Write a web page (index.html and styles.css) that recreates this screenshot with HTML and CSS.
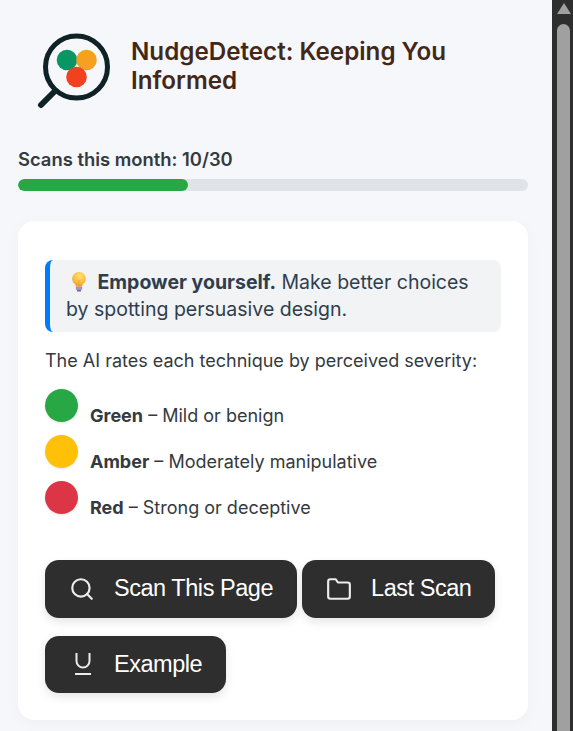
FILE: index.html
```html
<!DOCTYPE html>
<html lang="en">
<head>
    <meta charset="UTF-8">
    <meta name="viewport" content="width=device-width, initial-scale=1.0">
    <title>NudgeDetect</title>
    <link rel="stylesheet" href="styles.css">
</head>
<body>
    <div class="page">
        <!-- Header -->
        <header class="header">
            <svg class="logo" width="76" height="90" viewBox="0 0 76 90">
                <circle cx="39.500" cy="45" r="31" fill="none" stroke="#0f2226" stroke-width="5"></circle>
                <line x1="18" y1="69" x2="4" y2="83" stroke="#0f2226" stroke-width="6" stroke-linecap="round"></line>
                <circle cx="30" cy="38" r="10.300" fill="#0a9564"></circle>
                <circle cx="49.500" cy="38" r="10.300" fill="#f5a11f"></circle>
                <circle cx="39.500" cy="55" r="10.300" fill="#f1411e"></circle>
            </svg>
            <h1 class="title">NudgeDetect: Keeping You Informed</h1>
        </header>

        <!-- Usage -->
        <div class="usage">
            <div class="usage-label">Scans this month: 10/30</div>
            <div class="progress"><div class="progress-fill" style="width: 33.33%"></div></div>
        </div>

        <!-- Main card -->
        <main class="card">
            <div class="callout">
                <svg class="bulb" width="14" height="20" viewBox="0 0 14 20">
                    <defs>
                        <radialGradient id="bulb-glow" cx="0.55" cy="0.3" r="0.7">
                            <stop offset="0" stop-color="#ffe27a"></stop>
                            <stop offset="0.6" stop-color="#fcc13f"></stop>
                            <stop offset="1" stop-color="#f29a1f"></stop>
                        </radialGradient>
                    </defs>
                    <path d="M7 0a6.800 6.800 0 0 0-4.200 12.100c.8.700 1 1.400 1.100 2.400h6.200c.1-1 .3-1.700 1.100-2.400A6.800 6.800 0 0 0 7 0z" fill="url(#bulb-glow)"></path>
                    <path d="M5 7.500l2 2 2-2M7 9.500v5" fill="none" stroke="#ef9a2c" stroke-width="0.800"></path>
                    <rect x="3.800" y="14.500" width="6.400" height="3.500" rx="1" fill="#a993bd"></rect>
                    <rect x="5" y="18" width="4" height="1.500" fill="#75628b"></rect>
                </svg>
                <strong>Empower yourself.</strong> Make better choices by spotting persuasive design.
            </div>
            <p class="intro">The AI rates each technique by perceived severity:</p>
            <ul class="legend">
                <li class="legend-row"><span class="dot dot-green"></span><span class="legend-text"><strong>Green</strong> – Mild or benign</span></li>
                <li class="legend-row"><span class="dot dot-amber"></span><span class="legend-text"><strong>Amber</strong> – Moderately manipulative</span></li>
                <li class="legend-row"><span class="dot dot-red"></span><span class="legend-text"><strong>Red</strong> – Strong or deceptive</span></li>
            </ul>
            <div class="actions">
                <button class="btn">
                    <svg class="btn-icon" width="26" height="26" viewBox="0 0 24 24"><circle cx="11" cy="11" r="8"></circle><line x1="21" y1="21" x2="16.650" y2="16.650"></line></svg>
                    Scan This Page
                </button>
                <button class="btn">
                    <svg class="btn-icon" width="26" height="26" viewBox="0 0 24 24"><path d="M22 19a2 2 0 0 1-2 2H4a2 2 0 0 1-2-2V5a2 2 0 0 1 2-2h5l2 3h9a2 2 0 0 1 2 2z"></path></svg>
                    Last Scan
                </button>
                <button class="btn">
                    <svg class="btn-icon btn-icon-flat" width="26" height="26" viewBox="0 0 26 26"><path d="M7.500 2v8a6.500 6.500 0 0 0 13 0V2"></path><line x1="6" y1="23" x2="22" y2="23"></line></svg>
                    Example
                </button>
            </div>
        </main>
    </div>

    <!-- Scrollbar -->
    <div class="scrollbar">
        <div class="scroll-arrow"></div>
        <div class="scroll-thumb"></div>
    </div>
</body>
</html>
```
FILE: styles.css
```css
html, body {
    height: 100%;
}

body {
    margin: 0;
    display: flex;
    height: 731px;
    overflow: hidden;
    background-color: #f5f7fb;
    font-family: Inter, "Liberation Sans", sans-serif;
    color: #343a40;
}

.page {
    flex: 1;
    min-width: 0;
    padding: 22px 24px 0 18px;
}

.header {
    display: flex;
    align-items: center;
    gap: 18px;
    padding-left: 19px;
}

.logo {
    flex-shrink: 0;
}

.title {
    margin: 0 0 2px;
    font-size: 24.200px;
    line-height: 29px;
    font-weight: 600;
    color: #432818;
}

.usage {
    margin-top: 35px;
}

.usage-label {
    font-size: 18.400px;
    line-height: 24px;
    font-weight: 600;
    color: #343a40;
}

.progress {
    height: 12px;
    margin-top: 8px;
    background-color: #e0e4e8;
    border-radius: 6px;
    overflow: hidden;
}

.progress-fill {
    height: 100%;
    background-color: #28a745;
    border-radius: 6px;
}

.card {
    margin-top: 30px;
    padding: 39px 27px 27px;
    background-color: #ffffff;
    border-radius: 16px;
    box-shadow: 0 4px 16px rgba(0, 0, 0, 0.03);
}

.callout {
    padding: 9px 16px;
    background-color: #f1f3f5;
    border-left: 5px solid #007bff;
    border-radius: 8px;
    font-size: 19.500px;
    line-height: 27px;
    color: #2f3e4e;
}

.bulb {
    margin: 0 6px 0 6px;
    vertical-align: -3px;
}

.intro {
    margin: 15px 0 0;
    font-size: 18px;
    line-height: 27px;
}

.legend {
    list-style: none;
    margin: 15px 0 0;
    padding: 0;
}

.legend-row {
    display: flex;
    height: 46px;
}

.dot {
    width: 33px;
    height: 33px;
    margin-right: 12px;
    border-radius: 50%;
    box-shadow: 0 1px 3px rgba(0, 0, 0, 0.1);
}

.dot-green {
    background-color: #28a745;
}

.dot-amber {
    background-color: #ffc107;
}

.dot-red {
    background-color: #dc3545;
}

.legend-text {
    font-size: 18px;
    line-height: 27px;
    padding-top: 13px;
}

.actions {
    display: flex;
    flex-wrap: wrap;
    gap: 18px 5px;
    margin-top: 33px;
}

.btn {
    display: flex;
    align-items: center;
    gap: 19px;
    height: 57.500px;
    padding: 0 24px;
    background-color: #2e2e2e;
    color: #ffffff;
    border: none;
    border-radius: 14px;
    font-family: "Liberation Sans", Arial, sans-serif;
    font-size: 23.500px;
    letter-spacing: -0.460px;
    box-shadow: 0 4px 10px rgba(0, 0, 0, 0.1);
    cursor: pointer;
}

.btn-icon {
    flex-shrink: 0;
    fill: none;
    stroke: #ececec;
    stroke-width: 2;
    stroke-linecap: round;
    stroke-linejoin: round;
}

.btn-icon-flat {
    stroke-linecap: butt;
}

.scrollbar {
    display: flex;
    flex-direction: column;
    flex-shrink: 0;
    box-sizing: border-box;
    width: 21px;
    height: 100%;
    padding: 3px 3px 0 5px;
    background-color: #2e2e2e;
}

.scroll-arrow {
    width: 0;
    height: 0;
    margin: 0 auto;
    border-left: 7px solid transparent;
    border-right: 7px solid transparent;
    border-bottom: 11px solid #a0a0a0;
}

.scroll-thumb {
    flex: 1;
    margin-top: 10px;
    background-color: #a0a0a0;
    border-radius: 7px 7px 0 0;
}
```
